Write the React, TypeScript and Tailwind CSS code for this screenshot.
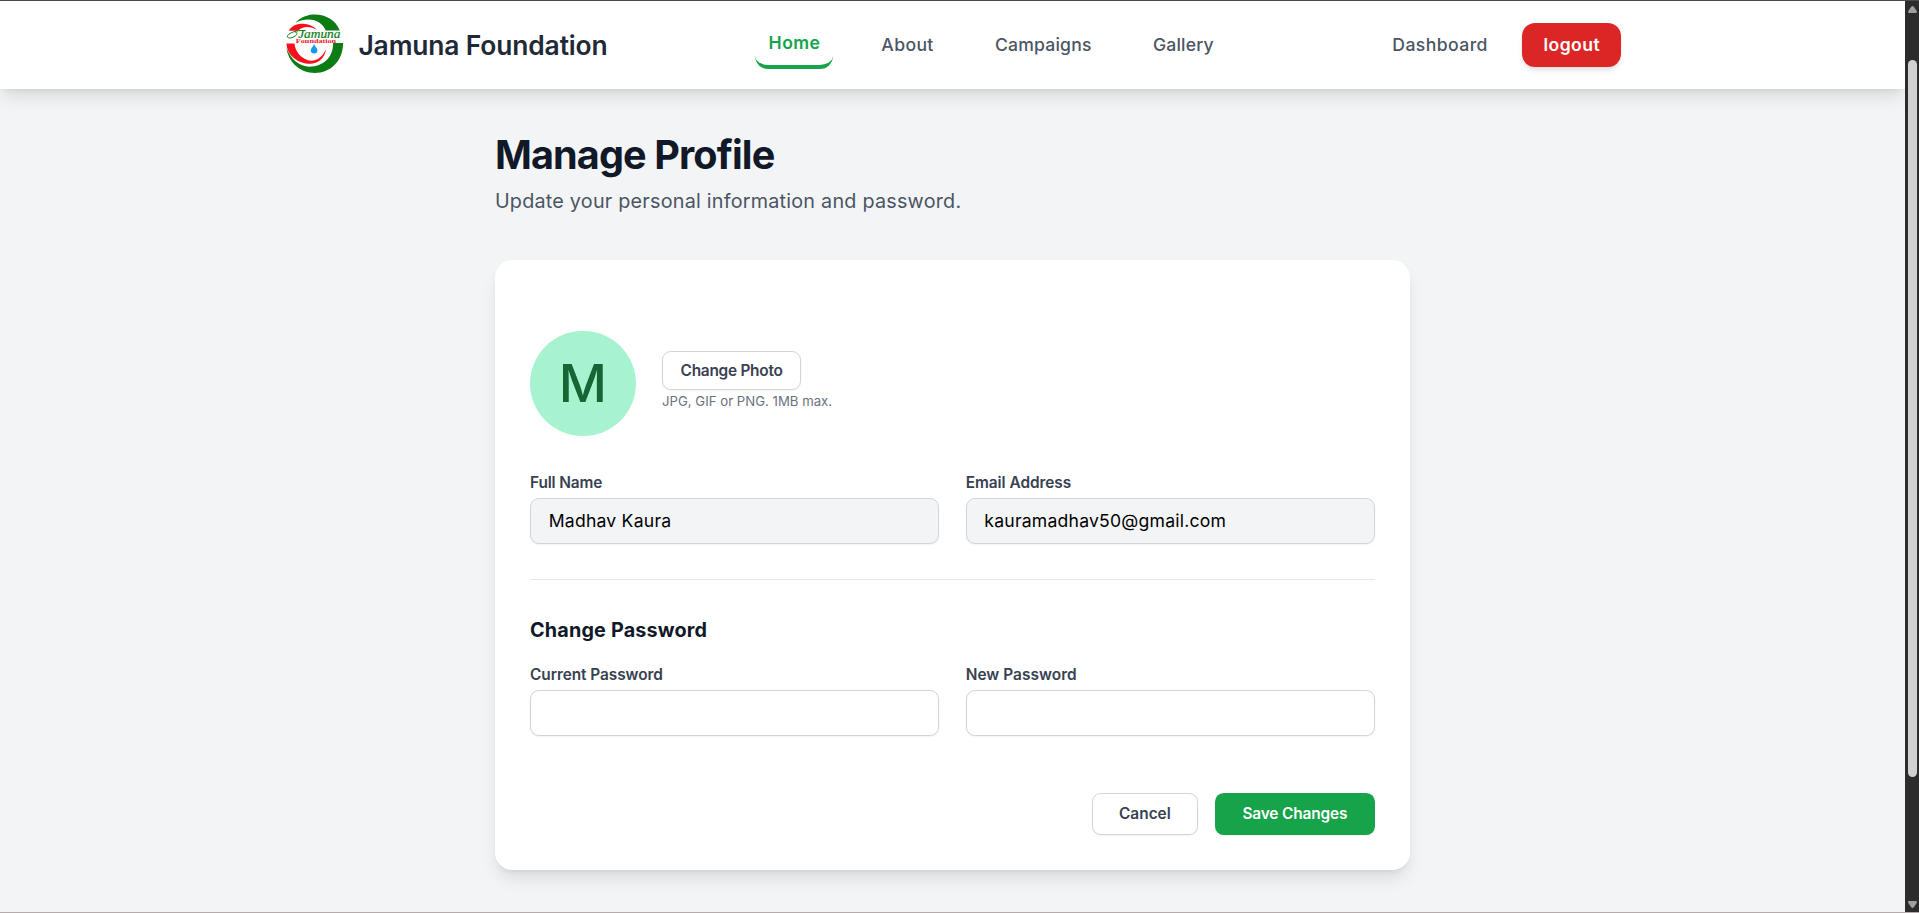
import React from "react";

function Logo() {
  return (
    <svg viewBox="41.5 42.6 185 185" className="h-[61.6px] w-[61.6px] shrink-0" aria-hidden="true">
      <path d="M76 69 C94 49 116 44 134 44 C168 44 198 62 209 92 L167 92 C156 64 118 47 76 69 Z" fill="#0d7c14" />
      <path d="M219 130 C219 183 182 220 134 220 C92 220 55 190 49 145 C64 182 88 200 118 201 C158 201 190 174 189 130 Z" fill="#0d7c14" />
      <path d="M56 93 C66 76 82 72 98 72 C116 73 130 79 140 90 C124 80 98 76 84 93 Z" fill="#f5101c" />
      <path d="M49 131 L73 131 C74 153 94 181 124 183 C142 183 158 170 168 148 C164 174 146 192 122 192 C82 192 50 166 49 131 Z" fill="#f5101c" />
      <path d="M107 93 C92 90 62 94 52 108 C49 117 64 117 76 108 C83 102 82 96 74 97" fill="none" stroke="#0d7c14" strokeWidth="3" />
      <text x="84" y="116" textLength="127" lengthAdjust="spacingAndGlyphs" fill="#0d7c14" stroke="#0d7c14" strokeWidth="0.6" fontFamily="Liberation Serif, serif" fontStyle="italic" fontSize="37">Jamuna</text>
      <text x="77" y="130" textLength="121" lengthAdjust="spacingAndGlyphs" fill="#f5101c" fontFamily="Liberation Serif, serif" fontWeight="700" fontSize="17">Foundation</text>
      <path d="M132 133 C134 140 142 145 142 152 A10 9 0 0 1 122 152 C122 145 130 140 132 133 Z" fill="#169be8" />
    </svg>
  );
}

const links = [
  { label: "About", cls: "w-[78.4px] tracking-[0.36px]" },
  { label: "Campaigns", cls: "w-[122.8px] tracking-[0.19px]" },
  { label: "Gallery", cls: "w-[87px] tracking-[0.18px]" },
];

function Header() {
  return (
    <header className="relative z-10 h-[88px] shrink-0 bg-white shadow-[0_11px_16.5px_-3.3px_rgba(0,0,0,0.1),0_4.4px_6.6px_-4.4px_rgba(0,0,0,0.1)]">
      <div className="flex h-full items-center px-[283.7px]">
        <div className="flex w-[471.3px] items-center gap-[13.2px]">
          <Logo />
          <span className="whitespace-nowrap text-[26.4px] font-semibold leading-[35px] tracking-[-0.14px] text-[#1f2937]">Jamuna Foundation</span>
        </div>
        <nav className="flex items-center gap-[35.2px] text-[17.6px] font-medium leading-[26.4px] text-[#4b5563]">
          <a className="w-[78px] rounded-[13.2px] border-b-4 border-[#16a34a] px-[13.6px] py-[8.8px] font-semibold tracking-[0.44px] text-[#16a34a]">Home</a>
          {links.map((l) => (
            <a key={l.label} className={"py-[8.8px] pl-[13.2px] " + l.cls}>{l.label}</a>
          ))}
        </nav>
        <div className="ml-auto flex items-center">
          <a className="w-[130px] text-[17.6px] font-medium leading-[26.4px] tracking-[0.42px] text-[#4b5563]">Dashboard</a>
          <button className="h-[44px] w-[99px] rounded-[13.2px] bg-[#dc2626] text-center text-[17.6px] font-semibold leading-[26.4px] tracking-[0.4px] text-white shadow-[0_4.4px_6.6px_-1.1px_rgba(0,0,0,0.1),0_2.2px_4.4px_-2.2px_rgba(0,0,0,0.1)]">logout</button>
        </div>
      </div>
    </header>
  );
}

function Field({ label, value, tracking }: { label: string; value?: string; tracking: string }) {
  return (
    <div className="flex flex-1 flex-col">
      <label className={"text-[15.4px] font-semibold leading-[22px] text-[#374151] " + tracking}>{label}</label>
      <div
        className={
          "mt-[4.4px] flex h-[46px] items-center rounded-[8.8px] border border-[#d1d5db] px-[17.6px] text-[17.6px] leading-[26.4px] tracking-[0.22px] text-black shadow-[0_1px_2px_rgba(0,0,0,0.05)] " +
          (value ? "bg-[#f3f4f6]" : "bg-white")
        }
      >
        {value}
      </div>
    </div>
  );
}

function Scrollbar() {
  return (
    <div className="flex w-[14px] shrink-0 flex-col items-center bg-[#2c2c2c] pl-px">
      <svg viewBox="0 0 9 7" className="mt-[5px] h-[7px] w-[9px]"><path d="M4.5 0 Q5.4 0 6 1 L9 5.6 Q9 7 8 7 H1 Q0 7 0 5.6 L3 1 Q3.6 0 4.5 0Z" fill="#9f9f9f" /></svg>
      <div className="mt-[47px] h-[717px] w-[9px] rounded-full bg-[#d1d1d1]" />
      <svg viewBox="0 0 9 7" className="mt-[124px] h-[7px] w-[9px]"><path d="M4.5 7 Q5.4 7 6 6 L9 1.4 Q9 0 8 0 H1 Q0 0 0 1.4 L3 6 Q3.6 7 4.5 7Z" fill="#9f9f9f" /></svg>
    </div>
  );
}

export default function App() {
  return (
    <div className="flex h-[913px] w-[1919px] flex-col overflow-hidden border-b border-t border-b-[#b5abab] border-t-[#4a4a4a] bg-[#f3f4f6] font-['Inter',sans-serif]">
      <div className="flex min-h-0 flex-1">
        <div className="flex min-w-0 flex-1 flex-col overflow-hidden">
          <Header />
          <main className="ml-[494.9px] w-[915.2px] pt-[44px]">
            <h1 className="text-[39.6px] font-bold leading-[44px] tracking-[-0.86px] text-[#111827]">Manage Profile</h1>
            <p className="mt-[9px] text-[19.8px] leading-[31px] tracking-[0.22px] text-[#4b5563]">Update your personal information and password.</p>
            <section className="mt-[43px] h-[610px] rounded-[17.6px] bg-white px-[35.2px] pt-[71px] shadow-[0_11px_16.5px_-3.3px_rgba(0,0,0,0.1),0_4.4px_6.6px_-4.4px_rgba(0,0,0,0.1)]">
              <div className="flex h-[105px] items-center gap-[26.4px]">
                <div className="flex h-[105px] w-[105.6px] items-center justify-center rounded-full bg-[#a7f3d0] text-[52.8px] font-medium leading-none text-[#166534]">M</div>
                <div className="flex flex-col pb-[6px]">
                  <button className="h-[39px] w-[139px] rounded-[8.8px] border border-[#d1d5db] bg-white text-[15.4px] font-semibold leading-[22px] tracking-[-0.25px] text-[#374151] shadow-[0_1px_2px_rgba(0,0,0,0.05)]">Change Photo</button>
                  <p className="mt-[2px] text-[13.2px] leading-[18px] text-[#6b7280]">JPG, GIF or PNG. 1MB max.</p>
                </div>
              </div>
              <div className="mt-[35.6px] flex gap-[26.4px]">
                <Field label="Full Name" value="Madhav Kaura" tracking="tracking-[-0.15px]" />
                <Field label="Email Address" value="kauramadhav50@gmail.com" tracking="tracking-[-0.03px]" />
              </div>
              <div className="mt-[35px] h-px bg-[#e5e7eb]" />
              <h2 className="mt-[35.4px] text-[19.8px] font-bold leading-[30.8px] tracking-[0.16px] text-[#111827]">Change Password</h2>
              <div className="mt-[17.4px] flex gap-[26.4px]">
                <Field label="Current Password" tracking="tracking-[-0.06px]" />
                <Field label="New Password" tracking="tracking-[0.05px]" />
              </div>
              <div className="mt-[57px] flex justify-end gap-[17px] text-[15.4px] font-semibold leading-[22px]">
                <button className="h-[42px] w-[106px] rounded-[8.8px] border border-[#d1d5db] bg-white text-[#374151] shadow-[0_1px_2px_rgba(0,0,0,0.05)]">Cancel</button>
                <button className="h-[42px] w-[160px] rounded-[8.8px] bg-[#16a34a] tracking-[-0.13px] text-white shadow-[0_1px_2px_rgba(0,0,0,0.05)]">Save Changes</button>
              </div>
            </section>
          </main>
        </div>
        <Scrollbar />
      </div>
    </div>
  );
}
